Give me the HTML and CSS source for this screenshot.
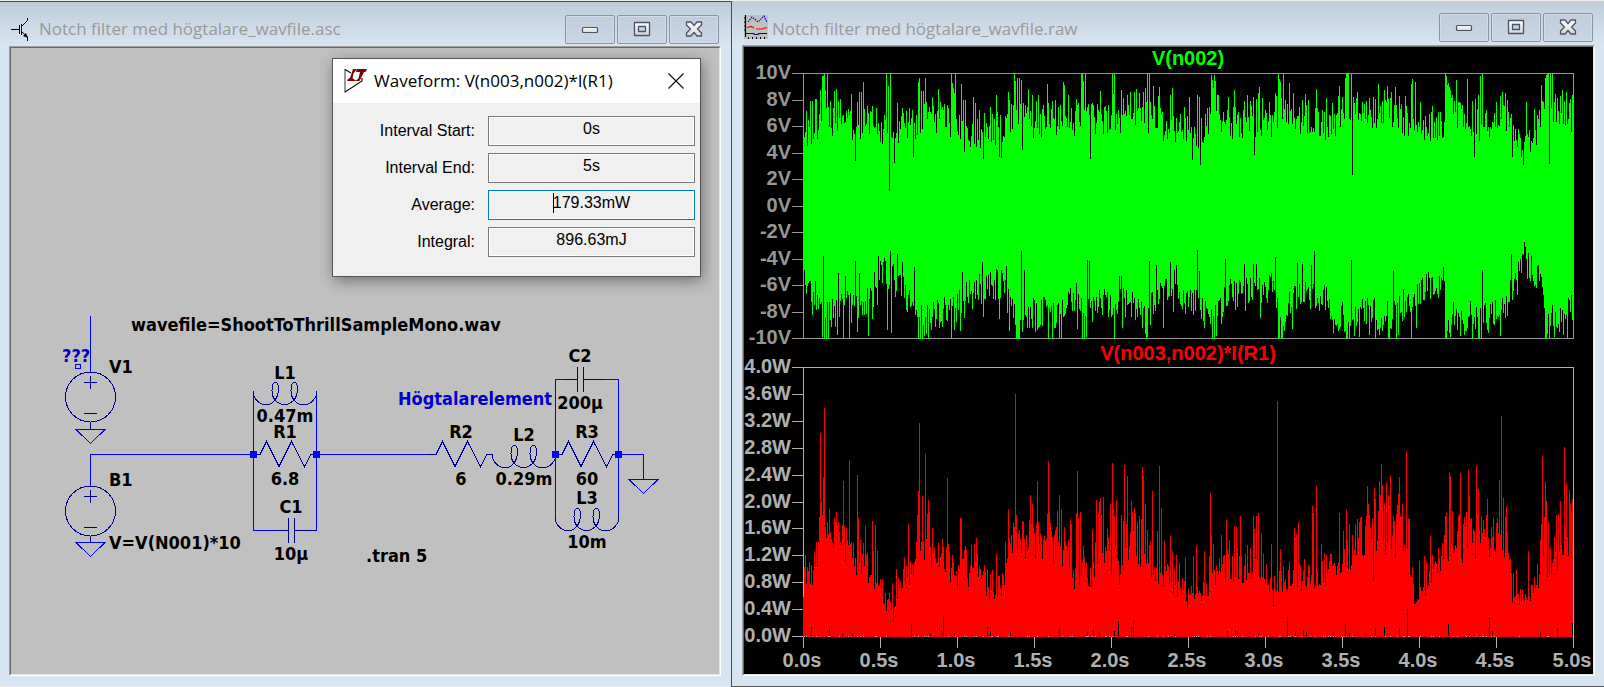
FILE: index.html
```
<!DOCTYPE html>
<html lang="sv">
<head>
<meta charset="utf-8">
<title>Notch filter med högtalare</title>
<link rel="stylesheet" href="styles.css">
</head>
<body>
<svg class="defs" aria-hidden="true">
  <defs>
    <linearGradient id="metal" x1="0" y1="0" x2="0" y2="1"><stop offset="0" stop-color="#fff"/><stop offset="1" stop-color="#d6d6d6"/></linearGradient>
    <symbol id="ico-min" viewBox="0 0 20 20"><rect x="2.500" y="8.500" width="15" height="5" rx="1" fill="url(#metal)" stroke="#4d5366" stroke-width="1.200"/></symbol>
    <symbol id="ico-max" viewBox="0 0 20 20"><path d="M2.500 3.500h15v13h-15z M6.500 7.500v5h7v-5z" fill="url(#metal)" fill-rule="evenodd" stroke="#4d5366" stroke-width="1.300" stroke-linejoin="round"/></symbol>
    <symbol id="ico-close" viewBox="0 0 20 20"><path d="M2.500 3h4.500l3 3.500L13 3h4.500v3L13.500 10l4 4v3H13l-3-3.500L7 17H2.500v-3l4-4-4-4z" fill="url(#metal)" stroke="#4d5366" stroke-width="1.300" stroke-linejoin="round"/></symbol>
  </defs>
</svg>
<main class="desktop">
  <section class="window schematic">
    <header class="titlebar">
      <svg class="app-icon" viewBox="0 0 18 23" aria-hidden="true"><path d="M0 11.500h8M8.500 7v9M10.500 6v11M16.500 0v2.500L11 8M11 14l5.500 5v4" fill="none" stroke="#000"/><path d="M12 18l3-3 2 5z"/></svg>
      <h1 class="title">Notch filter med högtalare_wavfile.asc</h1>
      <div class="controls">
        <button class="ctl" aria-label="Minimize"><svg><use href="#ico-min"/></svg></button>
        <button class="ctl" aria-label="Maximize"><svg><use href="#ico-max"/></svg></button>
        <button class="ctl" aria-label="Close"><svg><use href="#ico-close"/></svg></button>
      </div>
    </header>
    <div class="client">
      <svg class="sheet" viewBox="11 48 708 626" role="img" aria-label="Schematic">
        <defs>
          <path id="inductor" d="M.5 0V4C5 15 16 17 22 9C27 3 26-9 22.500-9C19-9 17 3 22 9C28 15 35 15 41 9C46 3 45-9 41.500-9C38-9 36 3 41 9C47 17 59 15 63.500 4V0"/>
          <path id="resistor" d="M0 .5H7L13.500-12.500 26 12.500 38.500-12.500 51.500 12.500 58 .5H63"/>
          <g id="source"><circle cx=".5" cy="25" r="25"/><path d="M.5 4V17M-6 10.500H7M-6 41.500H7M.5 50V57"/></g>
          <path id="ground" d="M-14 .5H15L.5 14.500Z"/>
          <path id="capacitor" d="M-14 .5H.5M.5-12.500V13M6.500-12.500V13M6.500 .5H28"/>
        </defs>
        <g class="wire">
          <path d="M90.500 316V372M90.500 486V454.500H253M253.500 391V530.500H276M316.500 391V530.500H304M316 454.500H430M555.500 517V379.500H563M605 379.500H618.500V517M618 454.500H643.500V479"/>
          <use href="#ground" x="90" y="429"/><use href="#ground" x="90" y="542"/><use href="#ground" x="643" y="479"/>
          <rect x="75.500" y="364.500" width="5" height="4"/>
        </g>
        <g class="part">
          <use href="#source" x="90" y="372"/><use href="#source" x="90" y="486"/>
          <use href="#inductor" x="253" y="391"/><use href="#inductor" x="492" y="454"/><use href="#inductor" x="555" y="517"/>
          <use href="#resistor" x="253" y="454"/><use href="#resistor" x="429" y="454"/><use href="#resistor" x="555" y="454"/>
          <use href="#capacitor" x="288" y="530"/><use href="#capacitor" x="577" y="379"/>
        </g>
        <g class="node"><path d="M250 451h7v7h-7zM313 451h7v7h-7zM552 451h7v7h-7zM615 451h7v7h-7z"/></g>
        <g class="label">
          <text x="131" y="331">wavefile=ShootToThrillSampleMono.wav</text>
          <text x="109" y="373">V1</text><text x="109" y="486">B1</text><text x="109" y="549">V=V(N001)*10</text>
          <text x="366" y="562">.tran 5</text>
          <text class="note" x="62" y="362">???</text><text class="note" x="398" y="405">Högtalarelement</text>
        </g>
        <g class="label mid">
          <text x="285" y="379">L1</text><text x="285" y="422">0.47m</text><text x="285" y="438">R1</text><text x="285" y="485">6.8</text>
          <text x="291" y="513">C1</text><text x="291" y="560">10µ</text>
          <text x="461" y="438">R2</text><text x="461" y="485">6</text><text x="524" y="441">L2</text><text x="524" y="485">0.29m</text>
          <text x="580" y="362">C2</text><text x="580" y="409">200µ</text><text x="587" y="438">R3</text><text x="587" y="485">60</text>
          <text x="587" y="504">L3</text><text x="587" y="548">10m</text>
        </g>
      </svg>
      <form class="dialog">
        <header class="dialog-bar">
          <svg class="lt-icon" viewBox="0 0 23 24" aria-hidden="true"><path d="M1 0V23.500" stroke="#777" stroke-width="1.500"/><path d="M1 .5L7 4M1 23L18 12V9" fill="none" stroke="#111" stroke-width="1.200"/><path fill="#800000" d="M9 0h4L9.500 4.500 8.500 9 12 12H3l1-2 2-1zM13 0h10l-1.500 3H20l-4.500 9H11l3.500-2.500L16 3h-4z"/></svg>
          <h2 class="dialog-title">Waveform: V(n003,n002)*I(R1)</h2>
          <button type="button" class="x" aria-label="Close"><svg viewBox="0 0 16 16"><path d="M.5 .5l15 15M15.500 .5l-15 15" stroke="#111" stroke-width="1.200"/></svg></button>
        </header>
        <div class="fields">
          <label for="f1">Interval Start:</label><div class="cell"><input id="f1" readonly value="0s"></div>
          <label for="f2">Interval End:</label><div class="cell"><input id="f2" readonly value="5s"></div>
          <label for="f3">Average:</label><div class="cell"><input id="f3" class="active" readonly value="179.33mW"><span class="caret"></span></div>
          <label for="f4">Integral:</label><div class="cell"><input id="f4" readonly value="896.63mJ"></div>
        </div>
      </form>
    </div>
  </section>
  <section class="window plots">
    <header class="titlebar">
      <svg class="app-icon plot-icon" viewBox="0 0 24 24" aria-hidden="true"><path fill="#c0c0c0" d="M0 0h24v24H0z"/><path d="M1.500 0v22M0 3h2M0 7h2M0 11h2M0 15h2" stroke="#000" stroke-width="1.200"/><path d="M4 23h20" stroke="#000" stroke-width="2" stroke-dasharray="1 3"/><path d="M4 7l4-5 6 5 6-6 3 6" fill="none" stroke="#00f" stroke-width="1.200" stroke-dasharray="1.500 1"/><path d="M3 12.500l4-1 3 1.500M12 14h6l5-1.500" fill="none" stroke="#f00" stroke-width="1.200"/><path d="M2 18.500h7l2 1h3l1-1h8" fill="none" stroke="#000080" stroke-width="1.200"/></svg>
      <h1 class="title">Notch filter med högtalare_wavfile.raw</h1>
      <div class="controls">
        <button class="ctl" aria-label="Minimize"><svg><use href="#ico-min"/></svg></button>
        <button class="ctl" aria-label="Maximize"><svg><use href="#ico-max"/></svg></button>
        <button class="ctl" aria-label="Close"><svg><use href="#ico-close"/></svg></button>
      </div>
    </header>
    <div class="client">
      <svg class="sheet" viewBox="744 47 849 627" role="img" aria-label="Waveform plots">
        <g class="axis volt" id="volt"><rect x="803.500" y="73.500" width="770" height="265"/></g>
        <g class="axis watt" id="watt"><rect x="803.500" y="367.500" width="770" height="269"/></g>
        <path id="trace-v" class="trace-v"/>
        <path id="trace-p" class="trace-p"/>
        <path id="gaps-p" class="gaps"/>
        <path id="specks" class="specks"/>
        <text class="name-v" x="1188" y="65">V(n002)</text>
        <text class="name-p" x="1188" y="360">V(n003,n002)*I(R1)</text>
      </svg>
    </div>
  </section>
</main>
<script src="plots.js"></script>
</body>
</html>
```
FILE: styles.css
```
* { box-sizing: border-box; }
body { margin: 0; background: #f0f0f0; font-family: "Liberation Sans", Arial, sans-serif; }
.defs { position: absolute; width: 0; height: 0; }
.desktop { display: grid; grid-template-columns: 731fr 873fr; min-height: 100vh; padding-top: 1px; }
.window { min-width: 0; background: linear-gradient(#bfcddb, #d7e4f2 44px); }
.schematic { border-top: 1px solid #454b50; border-bottom: 1px solid #e8edf2; padding: 0 10px 0 9px; }
.plots { border-left: 1px solid #454b50; border-bottom: 1px solid #50535a; padding: 0 9px 0 10px; }
.titlebar { display: flex; align-items: center; height: 44px; padding: 10px 2px 0 2px; }
.plots .titlebar { padding-top: 8px; }
.app-icon { width: 18px; height: 23px; flex: none; }
.plot-icon { width: 24px; height: 24px; }
.title { flex: 1; margin: 0; padding-left: 10px; font: 400 17px/24px "Open Sans", "Noto Sans", sans-serif; color: #999; white-space: nowrap; }
.plots .title { padding-left: 4px; padding-top: 3px; }
.controls { display: flex; gap: 2px; }
.ctl { width: 50px; height: 29px; padding: 0; display: grid; place-items: center; border: 1px solid #8793ae; border-radius: 2px; background: linear-gradient(#c0cddd, #c9d6e6); box-shadow: inset 0 0 0 1px #d0dcea; }
.ctl svg { width: 20px; height: 20px; }
.client { position: relative; border: 1px solid; border-color: #a0a0a0 #fff #fff #a0a0a0; }
.sheet { display: block; width: 100%; height: auto; border: 1px solid; border-color: #696969 #e3e3e3 #e3e3e3 #696969; background: #c0c0c0; }
.plots .sheet { background: #000; }
.wire, .part { fill: none; stroke-width: 1; shape-rendering: crispEdges; }
.wire { stroke: #0000ff; }
.part { stroke: #000090; }
.node { fill: #0000ff; }
.label { font: 700 18px "DejaVu Sans Condensed", "Noto Sans", "Open Sans", sans-serif; fill: #000; }
.note { fill: #0000c8; }
.mid { text-anchor: middle; }
.dialog { position: absolute; top: 11px; right: 19px; width: 369px; border: 1px solid #555; background: #f0f0f0; box-shadow: 2px 4px 14px rgba(0, 0, 0, .4); padding-bottom: 19px; }
.dialog-bar { display: flex; align-items: center; height: 44px; padding: 0 16px 0 11px; background: #fff; }
.lt-icon { width: 23px; height: 24px; }
.dialog-title { flex: 1; margin: 0; padding-left: 7px; font: 400 17px/24px "Open Sans", "Noto Sans", sans-serif; white-space: nowrap; }
.x { width: 16px; height: 16px; padding: 0; border: 0; background: none; }
.x svg { display: block; }
.fields { display: grid; grid-template-columns: 1fr 207px; column-gap: 13px; row-gap: 7px; padding: 13px 5px 0 0; font-size: 16px; }
.fields label { text-align: right; line-height: 30px; }
.cell { position: relative; }
.cell input { display: block; width: 100%; height: 30px; padding: 0 0 4px; border: 1px solid #7a7a7a; border-radius: 0; background: #f0f0f0; box-shadow: inset 0 0 0 1px #fff; font: 16px "Liberation Sans", Arial, sans-serif; text-align: center; outline: 0; color: #000; }
.cell .active { border-color: #0078d7; }
.caret { position: absolute; left: calc(50% - 39px); top: 3px; width: 1px; height: 20px; background: #000; }
.axis { font: 700 20px "Liberation Sans", Arial, sans-serif; shape-rendering: crispEdges; }
.axis rect, .axis path { fill: none; stroke: currentColor; }
.axis text { fill: currentColor; }
.volt { color: #969696; }
.watt { color: #b0b0b0; }
.axis .y { text-anchor: end; }
.axis .t, .name-v, .name-p { text-anchor: middle; }
.name-v, .name-p { font: 700 20px "Liberation Sans", Arial, sans-serif; }
.trace-v, .trace-p, .gaps, .specks { shape-rendering: crispEdges; }
.trace-v, .name-v { fill: #00ff00; }
.trace-p, .name-p { fill: #ff0000; }
.gaps { fill: #000; }
.specks { fill: #b0b0b0; }
```
FILE: plots.js
```
// Draws both plot panes: axis ticks and labels, then one bar per time column.
const X0 = 803, COLS = 770, NS = 'http://www.w3.org/2000/svg';
const pairs = s => s.trim().split(/\s+/).map(p => p.split(',').map(Number));
const noise = n => { const v = Math.sin(n * 127.1 + 11.7) * 43758.5453; return v - Math.floor(v); };

function envelope(points) {
  const p = pairs(points);
  return x => {
    let i = 1;
    while (i < p.length - 1 && p[i][0] < x) i++;
    const [a, b] = [p[i - 1], p[i]];
    return a[1] + (b[1] - a[1]) * (x - a[0]) / (b[0] - a[0]);
  };
}

function series(base, peaks, vary) {
  const fixed = new Map(pairs(peaks));
  return Array.from({ length: COLS }, (_, x) =>
    Math.round(fixed.has(x) ? fixed.get(x) : vary(base(x), x)));
}

function add(parent, tag, attrs, text) {
  const el = document.createElementNS(NS, tag);
  for (const k in attrs) el.setAttribute(k, attrs[k]);
  if (text) el.textContent = text;
  parent.appendChild(el);
}

function axis(id, top, height, labels) {
  const g = document.getElementById(id);
  labels.forEach((label, i) => {
    const y = Math.round(top + height * i / 10);
    add(g, 'path', { d: `M792 ${y + 0.5}H803` });
    add(g, 'text', { class: 'y', x: 791, y: y + 6 }, label);
  });
}
axis('volt', 73, 265, [10, 8, 6, 4, 2, 0, -2, -4, -6, -8, -10].map(v => v + 'V'));
axis('watt', 367, 269, Array.from({ length: 11 }, (_, i) => (4 - 0.4 * i).toFixed(1) + 'W'));
for (let i = 0; i <= 10; i++) {
  const x = X0 + 77 * i;
  add(document.getElementById('watt'), 'path', { d: `M${x + 0.5} 636V648` });
  add(document.getElementById('watt'), 'text', { class: 't', x: x - 1, y: 667 }, (i / 2).toFixed(1) + 's');
}

// Depth in pixels below the +10V line.
const upper = series(envelope('0,58 12,52 20,42 35,50 60,50 75,58 90,55 110,50 120,45 145,48 165,60 180,60 203,52 212,40 225,50 250,45 270,52 280,40 300,50 320,42 335,45 350,45 360,52 380,52 397,62 410,40 425,50 450,48 465,55 475,40 490,42 520,52 535,55 545,35 560,42 580,38 600,48 625,55 640,50 646,30 660,50 690,52 703,45 712,60 722,75 735,55 745,25 755,40 769,45'),
  `0,37 3,38 7,28 9,28 12,26 13,26 17,17 19,3 20,3 21,0 22,17 24,0 27,28 31,18 33,16 35,28 37,26 48,21 52,88 54,29 56,19 58,19 60,9 64,33 69,33 73,35
   83,0 85,13 86,118 87,0 91,90 94,30 99,35 103,38 109,37 110,84 115,9 116,5 118,18 120,18 121,31 122,5 129,24 135,16 137,29 144,32 148,0 149,10 150,15 151,20 152,0
   158,11 160,27 161,79 162,27 170,24 172,30 176,37 180,86 181,40 187,34 193,22 196,84 198,85 205,19 206,27 210,32 211,0 212,8 214,5 216,5 218,7 219,77 220,30 222,32 225,16 229,22 233,28
   235,22 239,36 244,11 248,36 252,27 255,34 260,9 261,12 265,22 273,26 275,30 278,0 279,0 280,8 282,0 287,86 288,31 290,32 294,31 297,18 301,34 309,0 310,21 311,0 318,17 320,25
   324,22 327,19 331,19 333,16 336,20 340,19 342,15 344,0 346,0 350,13 355,23 356,14 367,22 369,15 381,34 386,24 389,87 394,22 396,24 397,92 408,2 409,7 410,15 411,2 412,8 414,22
   415,22 425,24 431,17 441,28 444,22 447,28 450,24 451,82 453,26 455,20 456,14 459,25 466,29 472,20 473,23 475,0 476,6 477,9 480,0 482,27 486,10 490,20 499,27 502,21 505,27
   513,16 523,25 529,30 535,23 536,13 539,24 542,5 543,0 544,0 545,0 548,0 549,102 550,24 554,19 563,28 572,26 575,11 579,28 581,17 584,13 588,19 592,14 596,23 602,23 608,11
   609,6 612,9 617,29 629,33 642,0 643,3 644,12 645,10 647,17 649,22 653,7 659,32 664,6 669,28 671,84 672,26 675,22 677,3 679,0 693,29 697,23 699,19 702,20 704,27 709,84 720,92
   723,29 731,36 738,12 740,29 742,5 743,2 744,0 745,0 746,91 747,0 749,0 752,21 754,25 757,23 759,17 763,19 767,26 769,22`,
  (b, x) => Math.max(0, b + (noise(x) - 0.5) * 34));

// Height in pixels above the -10V line.
const lower = series(envelope('0,60 8,50 15,35 25,28 45,32 60,35 74,45 80,65 95,55 105,40 115,18 130,22 150,30 165,45 180,50 200,55 208,28 216,14 230,28 255,24 270,45 280,24 300,35 315,35 330,35 343,18 355,50 375,40 390,35 402,32 412,28 425,45 450,45 470,50 476,14 490,40 510,45 530,32 545,18 560,24 575,24 590,24 600,35 615,50 640,55 644,18 660,24 678,20 700,30 712,50 720,82 735,60 745,18 770,30'),
  `0,72 9,24 19,2 20,83 21,0 22,21 23,0 25,0 32,12 34,4 35,66 40,0 42,63 46,0 52,78 54,7 56,66 65,3 69,20 71,67 75,83 77,78 81,81 84,9 87,88 88,6 90,75 94,85 99,77 103,29 111,72 115,0 117,0 119,0 121,3 125,0 128,9 138,18
   148,0 151,9 157,8 159,67 161,21 179,77 180,22 193,70 196,20 203,73 206,8 213,0 214,0 215,0 216,0 218,88 221,69 226,11 232,7 234,9 245,0 249,0 256,0 258,0 274,10 279,0 281,0 283,2 284,79 286,78 289,17
   311,0 316,63 318,63 319,11 343,0 344,2 346,78 353,74 360,11 367,77 371,69 373,74 394,89 396,68 401,11 409,0 411,0 413,3 418,15 422,80 441,75 450,75 453,75 457,21 472,82 475,0 476,0 478,0 479,0 489,10
   494,76 499,75 508,74 511,88 530,6 535,8 543,0 544,0 546,0 548,79 551,3 556,2 566,4 572,0 576,4 585,0 586,0 590,68 593,0 595,4 608,0 613,11 642,0 643,0 646,6 657,3 661,4 669,0 675,0 676,0
   678,0 679,69 684,9 697,3 708,85 717,80 719,85 720,84 723,80 742,0 743,0 746,0 751,2 760,4 764,0`,
  (b, x) => Math.max(0, b + (noise(x + 900) - 0.5) * 34));

let d = '';
for (let x = 0; x < COLS; x++) d += `M${X0 + x} ${73 + upper[x]}h1V${339 - lower[x]}h-1z`;
document.getElementById('trace-v').setAttribute('d', d);

// Height in pixels above the 0W line.
const power = series(envelope('0,45 10,58 17,95 30,88 45,75 55,60 65,58 75,45 82,30 90,22 100,50 110,50 115,85 130,75 150,60 160,55 175,55 187,40 200,45 205,80 220,70 240,85 260,80 272,60 287,55 300,80 315,60 330,90 350,60 364,52 385,38 402,42 420,58 440,58 460,60 470,45 500,52 520,55 545,66 555,86 575,92 600,85 612,30 625,48 640,70 650,75 670,86 690,86 704,88 709,38 722,32 735,48 745,65 755,70 769,90'),
  `0,40 1,70 2,82 5,66 8,72 11,86 13,95 16,120 17,204 19,122 20,160 21,229 22,110 25,103 27,105 29,95 31,119 33,125 34,112 38,91 40,156 41,111 43,109 44,97 46,177 47,93 50,94 54,162 55,119 57,97 60,94 62,111 64,84 69,116 70,86 72,112 74,86 77,58 79,58 82,44 86,44 89,54 90,15
   93,68 95,59 100,68 101,80 103,72 105,113 107,76 109,73 112,78 113,95 114,122 115,146 116,214 118,95 119,141 122,183 124,123 125,137 126,125 129,109 131,90 134,75 138,84 141,68 143,90 144,159 145,93 149,82 153,66 157,119 158,119 159,78 161,87 162,91 163,87 168,92 171,93
   173,99 174,83 177,68 181,72 184,68 187,63 189,67 193,83 196,61 199,64 202,95 205,128 206,99 210,114 211,110 212,243 213,122 214,88 216,107 219,116 220,115 223,102 226,117 227,142 228,113 229,133 231,104 234,156 235,115 237,104 241,101 244,123 245,176 246,125 247,114
   249,100 251,102 254,126 256,142 258,128 261,110 265,97 267,118 268,113 271,48 273,124 274,166 275,119 277,125 280,91 283,74 289,107 292,95 293,137 295,123 296,135 297,139 298,122 300,140 304,108 307,133 309,174 310,129 311,121 313,137 316,52 318,122 320,116 321,172 323,113
   324,161 328,136 329,125 331,129 334,115 336,121 338,118 339,170 340,161 342,133 344,107 347,95 349,146 354,106 356,171 358,129 361,96 364,73 367,101 369,86 373,82 376,74 382,79 384,29 390,81 393,91 401,86 406,81 407,144 408,102 410,93 416,79 418,102 423,117 424,88 426,97
   431,111 433,110 434,89 437,121 442,83 444,92 447,89 450,121 451,108 453,121 455,124 458,103 463,73 468,93 470,30 474,236 477,88 480,71 486,75 491,109 492,99 493,103 495,115 501,78 505,72 509,131 510,124 513,151 518,93 521,84 523,82 527,83 532,71 536,124 540,106 543,127 544,97
   546,113 549,102 552,113 554,118 557,119 558,120 562,111 564,151 565,133 566,122 569,118 570,56 571,149 572,138 575,126 576,156 577,142 578,173 579,152 581,134 583,155 585,142 586,132 587,161 591,116 594,132 595,143 596,160 599,133 603,186 605,118 606,119 609,70 616,76 621,81
   623,75 627,101 629,82 633,74 638,82 641,102 642,121 643,124 646,164 647,161 649,126 651,87 653,89 655,121 656,123 657,164 661,120 663,125 665,167 666,141 668,119 673,171 675,148 680,117 683,122 684,138 688,110 690,119 693,114 696,157 698,221 700,139 702,120 703,131 704,105
   710,64 713,68 725,86 731,60 734,73 737,97 738,113 739,182 741,120 742,155 743,136 745,115 751,100 753,122 755,123 757,136 761,190 763,153 766,147 767,133 769,138`,
  (b, x) => b * (0.88 + noise(x + 3000) * 0.55));

d = '';
for (let x = 0; x < COLS; x++) d += `M${X0 + x} ${637 - power[x]}h1V637h-1z`;
document.getElementById('trace-p').setAttribute('d', d);

// Columns whose minimum stays above zero leave a gap at the foot of the trace.
d = '';
for (const [x, h] of pairs('8,9 26,6 39,3 49,2 108,12 127,2 138,5 140,20 151,3 184,9 187,4 207,4 256,8 284,4 290,6 296,4 311,5 315,15 328,9 330,16 371,2 424,5 432,6 434,4 455,3 484,19 492,4 500,6 503,4 530,4 542,12 546,3 562,3 572,8 581,9 596,8 604,27 645,12 666,3 686,19 689,5 737,4 754,8 769,13'))
  d += `M${X0 + x} ${636 - h}h1v${h}h-1z`;
document.getElementById('gaps-p').setAttribute('d', d);

d = '';
for (let x = 0; x < COLS; x++) if (noise(x + 7000) > 0.87) d += `M${X0 + x} 636h1v1h-1z`;
document.getElementById('specks').setAttribute('d', d);
```
